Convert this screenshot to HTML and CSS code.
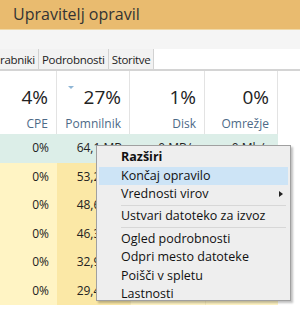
FILE: index.html
```html
<!DOCTYPE html>
<html>
<head>
<meta charset="utf-8">
<link rel="stylesheet" href="styles.css">
</head>
<body>
<div class="app">
  <div class="title">Upravitelj opravil</div>
  <div class="strip"></div>
  <div class="tabs">
    <div class="tab first">rabniki</div>
    <div class="tab">Podrobnosti</div>
    <div class="tab">Storitve</div>
  </div>
  <div class="header">
    <div class="hcell"><div class="pct">4%</div><div class="lbl">CPE</div></div>
    <div class="hcell sorted"><span class="sort"></span><div class="pct">27%</div><div class="lbl">Pomnilnik</div></div>
    <div class="hcell"><div class="pct">1%</div><div class="lbl">Disk</div></div>
    <div class="hcell"><div class="pct">0%</div><div class="lbl">Omrežje</div></div>
    <div class="hcell empty"></div>
  </div>
  <div class="rows">
    <div class="row sel"><div class="c">0%</div><div class="c">64,1 MB</div><div class="c">0 MB/s</div><div class="c">0 Mb/s</div><div class="c e"></div></div>
    <div class="row"><div class="c cpu">0%</div><div class="c mem">53,2 MB</div><div class="c d"></div><div class="c d"></div><div class="c e"></div></div>
    <div class="row"><div class="c cpu">0%</div><div class="c mem">48,6 MB</div><div class="c d"></div><div class="c d"></div><div class="c e"></div></div>
    <div class="row"><div class="c cpu">0%</div><div class="c mem">46,3 MB</div><div class="c d"></div><div class="c d"></div><div class="c e"></div></div>
    <div class="row"><div class="c cpu">0%</div><div class="c mem">32,9 MB</div><div class="c d"></div><div class="c d"></div><div class="c e"></div></div>
    <div class="row"><div class="c cpu">0%</div><div class="c mem">29,4 MB</div><div class="c d"></div><div class="c d"></div><div class="c e"></div></div>
  </div>
  <div class="menu">
    <div class="item bold">Razširi</div>
    <div class="item hot">Končaj opravilo</div>
    <div class="item sub">Vrednosti virov<span class="arrow"></span></div>
    <div class="sep"></div>
    <div class="item">Ustvari datoteko za izvoz</div>
    <div class="sep sep2"></div>
    <div class="item">Ogled podrobnosti</div>
    <div class="item">Odpri mesto datoteke</div>
    <div class="item">Poišči v spletu</div>
    <div class="item">Lastnosti</div>
  </div>
</div>
</body>
</html>
```

FILE: styles.css
```css
* { box-sizing: border-box; }
html, body { margin: 0; padding: 0; }
body {
  width: 300px;
  height: 310px;
  overflow: hidden;
  background: #fff;
  font-family: "Open Sans", "Noto Sans", sans-serif;
  color: #222;
}
.app { position: relative; width: 300px; height: 310px; overflow: hidden; }
.title {
  height: 29px;
  background: #e9bb6f;
  color: #333;
  font-size: 16px;
  line-height: 29px;
  padding-left: 13px;
}
.strip { height: 20px; background: #f5f5f5; border-top: 1px solid #f0d9a8; }
.tabs {
  display: flex;
  height: 22px;
  border-bottom: 2px solid #d4d4d4;
  background: #fff;
}
.tab {
  font-size: 11.5px;
  letter-spacing: -0.3px;
  line-height: 22px;
  padding: 0 3px;
  background: #f2f2f2;
  border-right: 1px solid #d2d2d2;
  color: #222;
}
.tab.first { padding-left: 0; }
.header {
  display: grid;
  grid-template-columns: 57px 73px 75px 73px 22px;
  height: 63px;
}
.hcell {
  position: relative;
  border-right: 1px solid #e3e3e3;
  text-align: right;
  padding-right: 8px;
  padding-top: 13px;
}
.hcell.empty { border-right: none; }
.pct { font-size: 19px; line-height: 26px; color: #222; }
.lbl { font-size: 12px; line-height: 20px; color: #4d6a87; margin-top: 4px; }
.sort {
  position: absolute;
  left: 11px;
  top: 15px;
  width: 0; height: 0;
  border-left: 3px solid transparent;
  border-right: 3px solid transparent;
  border-top: 3px solid #8fb6d6;
}
.rows { display: flex; flex-direction: column; }
.row {
  display: grid;
  grid-template-columns: 57px 73px 75px 73px 22px;
  height: 28.5px;
  font-size: 12px;
  line-height: 28.5px;
}
.c { text-align: right; padding-right: 8px; white-space: nowrap; overflow: hidden; }
.row.sel .c { background: #dceee8; }
.row.sel .c.e { background: #fff; }
.cpu { background: #fff4c4; }
.mem { background: #fbe8a6; }
.d { background: #fff4c4; border-left: 1px solid #f5e9b8; }
.e { background: #fff; }
.menu {
  position: absolute;
  left: 96px;
  top: 145px;
  width: 195px;
  height: 156px;
  background: #eeeeee;
  border: 1px solid #a0a0a0;
  box-shadow: 2px 2px 2px rgba(0,0,0,0.25);
  padding: 2px 2px;
  font-size: 12.5px;
  color: #111;
}
.item {
  position: relative;
  height: 18.5px;
  line-height: 18.5px;
  padding-left: 22px;
}
.item.bold { font-weight: bold; }
.item.hot { background: #cde4f6; }
.arrow {
  position: absolute;
  right: 5px;
  top: 6px;
  width: 0; height: 0;
  border-top: 3.5px solid transparent;
  border-bottom: 3.5px solid transparent;
  border-left: 4px solid #222;
}
.sep { height: 1px; background: #d7d7d7; margin: 1px 2px 1px 22px; }
.sep2 { margin: 2px 2px 1.5px 22px; }
```
